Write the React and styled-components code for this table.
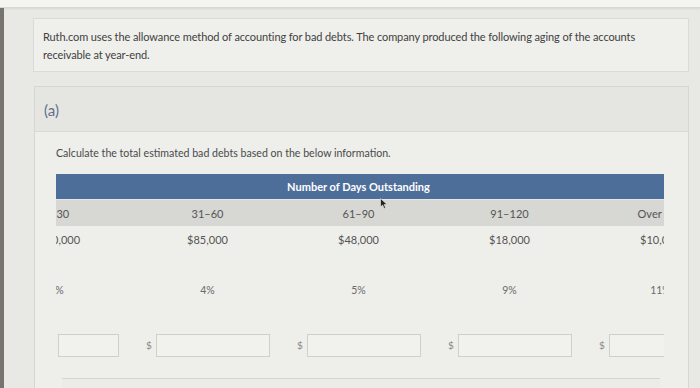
import styled, { createGlobalStyle } from "styled-components";

const GlobalStyle = createGlobalStyle`
body {
  margin: 0;
  background: #e8e8e4;
  font-family: Lato, "Liberation Sans", sans-serif;
}
`;

const days = ["0–30", "31–60", "61–90", "91–120", "Over 120"];
const amounts = ["$220,000", "$85,000", "$48,000", "$18,000", "$10,000"];
const rates = ["2%", "4%", "5%", "9%", "11%"];

const App = () => {
  return (
    <Page>
      <GlobalStyle />
      <TopBar />
      <Shell>
        <Strip />
        <Main>
          <Intro>
            Ruth.com uses the allowance method of accounting for bad debts. The company produced the following aging of the accounts
            receivable at year-end.
          </Intro>
          <Part>
            <PartHead>(a)</PartHead>
            <PartBody>
              <Prompt>Calculate the total estimated bad debts based on the below information.</Prompt>
              <Scroller>
                <Grid>
                  <HeadCell>Number of Days Outstanding</HeadCell>
                  {days.map((d) => (
                    <Cell key={d} shaded>{d}</Cell>
                  ))}
                  {amounts.map((a) => (
                    <Cell key={a}>{a}</Cell>
                  ))}
                  {rates.map((r) => (
                    <RateCell key={r}>{r}</RateCell>
                  ))}
                  {days.map((d, i) => (
                    <InputCell key={"in" + d}>
                      {i > 0 && <Dollar>$</Dollar>}
                      <Field narrow={i === 0} />
                    </InputCell>
                  ))}
                </Grid>
              </Scroller>
              <NextBox />
            </PartBody>
          </Part>
        </Main>
      </Shell>
      <Cursor width="8" height="11" viewBox="0 0 8 11">
        <path d="M0.5 0.5 L0.5 9 L2.6 7 L4.2 10.4 L5.6 9.8 L4.1 6.5 L7 6.4 Z" fill="#222" stroke="#eee" strokeWidth="0.6" />
      </Cursor>
    </Page>
  );
};

const Page = styled.div`
  position: relative;
  width: 700px;
  height: 388px;
  overflow: hidden;
  background: #e8e8e4;
`;

const TopBar = styled.div`
  height: 7px;
  background: #f4f4f1;
  border-bottom: 1px solid #d8d8d4;
  box-shadow: 0 1px 2px rgba(0, 0, 0, 0.08);
`;

const Shell = styled.div`
  display: flex;
  height: 380px;
`;

const Strip = styled.div`
  width: 4px;
  flex-shrink: 0;
  background: #77746e;
`;

const Main = styled.div`
  width: 656px;
  min-width: 0;
  padding: 10px 11px 0 29px;
  display: flex;
  flex-direction: column;
  gap: 14px;
`;

const Intro = styled.div`
  background: #efefeb;
  border: 1px solid #dadad6;
  padding: 9px 10px 7px 9px;
  font-size: 11px;
  line-height: 18px;
  color: #414141;
  letter-spacing: -0.1px;
`;

const Part = styled.div`
  flex: 1;
  min-width: 0;
  border: 1px solid #d6d6d2;
  border-bottom: none;
  display: flex;
  flex-direction: column;
  margin-left: 1px;
`;

const PartHead = styled.div`
  height: 42px;
  background: #e5e5e1;
  border-bottom: 1px solid #d9d9d5;
  padding: 2px 0 0 9px;
  display: flex;
  align-items: center;
  font-size: 15px;
  color: #5f708c;
`;

const PartBody = styled.div`
  flex: 1;
  background: #eeeeea;
  padding: 13px 24px 0 21px;
`;

const Prompt = styled.div`
  font-size: 10.6px;
  line-height: 16px;
  color: #4a4a4a;
  margin-bottom: 13px;
`;

const Scroller = styled.div`
  width: 608px;
  overflow: hidden;
`;

const Grid = styled.div`
  display: grid;
  grid-template-columns: repeat(5, 151px);
  margin-left: -75px;
  width: 755px;
  font-size: 11px;
  color: #555;
`;

const HeadCell = styled.div`
  grid-column: 1 / -1;
  height: 25px;
  background: #4e6e9a;
  color: #fff;
  font-weight: 700;
  font-size: 11px;
  display: flex;
  align-items: center;
  justify-content: center;
  border-bottom: 1px solid #e6e6e2;
`;

const Cell = styled.div`
  height: 26px;
  display: flex;
  align-items: center;
  justify-content: center;
  background: ${(p) => (p.shaded ? "#d7d7d3" : "transparent")};
`;

const RateCell = styled(Cell)`
  height: 76px;
  color: #6a6a6a;
  font-size: 10.5px;
`;

const InputCell = styled.div`
  height: 34px;
  display: flex;
  align-items: center;
  justify-content: flex-end;
  gap: 3px;
  padding-right: 13px;
`;

const Dollar = styled.span`
  color: #888;
  font-size: 10px;
  width: 7px;
`;

const Field = styled.div`
  width: ${(p) => (p.narrow ? "59px" : "112px")};
  height: 21px;
  background: #f1f1ee;
  border: 1px solid #cfcfcb;
`;

const NextBox = styled.div`
  margin: 16px 0 0 6px;
  width: 598px;
  height: 20px;
  border-top: 1px solid #d4d4d0;
  background: #ebebe7;
`;

const Cursor = styled.svg`
  position: absolute;
  left: 380px;
  top: 198px;
`;

export default App;
